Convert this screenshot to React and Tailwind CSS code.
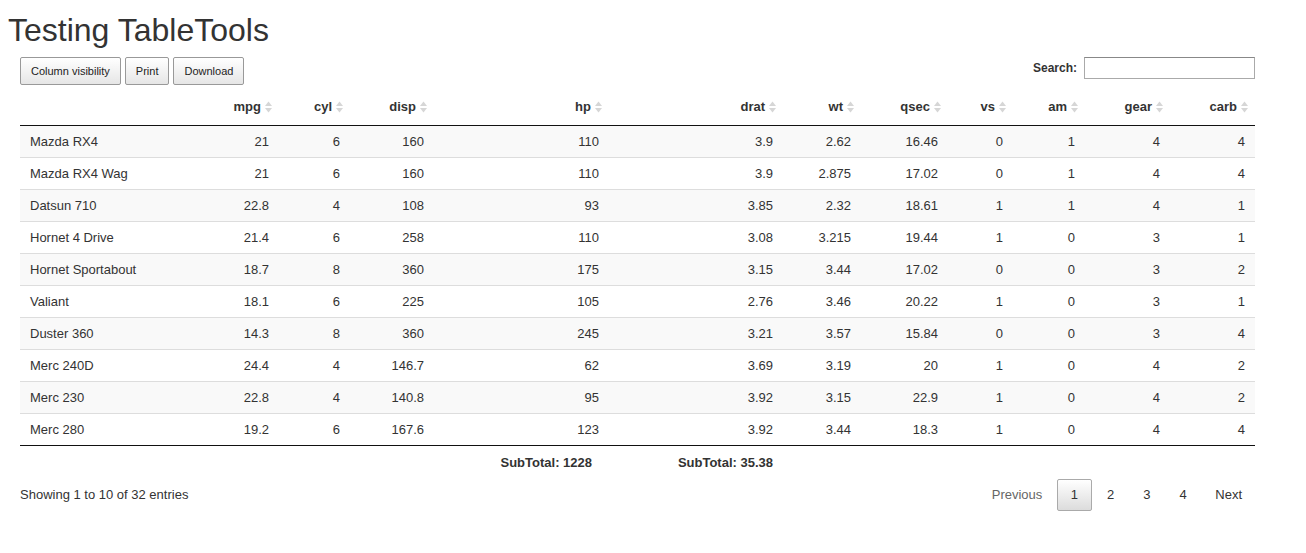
import React from 'react';

// mtcars preview rows
const columns = ['mpg', 'cyl', 'disp', 'hp', 'drat', 'wt', 'qsec', 'vs', 'am', 'gear', 'carb'];
const widths = [180, 79, 71, 84, 175, 174, 78, 87, 65, 72, 85, 85];

const rows = [
    ['Mazda RX4', '21', '6', '160', '110', '3.9', '2.62', '16.46', '0', '1', '4', '4'],
    ['Mazda RX4 Wag', '21', '6', '160', '110', '3.9', '2.875', '17.02', '0', '1', '4', '4'],
    ['Datsun 710', '22.8', '4', '108', '93', '3.85', '2.32', '18.61', '1', '1', '4', '1'],
    ['Hornet 4 Drive', '21.4', '6', '258', '110', '3.08', '3.215', '19.44', '1', '0', '3', '1'],
    ['Hornet Sportabout', '18.7', '8', '360', '175', '3.15', '3.44', '17.02', '0', '0', '3', '2'],
    ['Valiant', '18.1', '6', '225', '105', '2.76', '3.46', '20.22', '1', '0', '3', '1'],
    ['Duster 360', '14.3', '8', '360', '245', '3.21', '3.57', '15.84', '0', '0', '3', '4'],
    ['Merc 240D', '24.4', '4', '146.7', '62', '3.69', '3.19', '20', '1', '0', '4', '2'],
    ['Merc 230', '22.8', '4', '140.8', '95', '3.92', '3.15', '22.9', '1', '0', '4', '2'],
    ['Merc 280', '19.2', '6', '167.6', '123', '3.92', '3.44', '18.3', '1', '0', '4', '4'],
];

const SortIcon = () => (
    <svg width="7" height="12" viewBox="0 0 7 12" className="ml-[4px] shrink-0">
        <polygon points="3.5,0.5 7,5 0,5" fill="#d6d6d6" />
        <polygon points="0,7 7,7 3.5,11.5" fill="#d6d6d6" />
    </svg>
);

const ToolButton = ({ children }) => (
    <button className="h-[28px] px-[10px] text-[11px] text-[#222] border border-[#999] rounded-[2px] bg-gradient-to-b from-white to-[#e6e6e6]">
        {children}
    </button>
);

const PageButton = ({ children, current }) => (
    <span
        className={
            'ml-[2px] px-[12.5px] h-[32px] flex items-center border rounded-[2px] text-[#333] ' +
            (current ? 'border-[#aaa] bg-gradient-to-b from-white to-[#dcdcdc]' : 'border-transparent')
        }
    >
        {children}
    </span>
);

const App = () => {
    return (
        <div className="min-h-[553px] bg-white text-[#333]" style={{ fontFamily: '"Liberation Sans", Arial, sans-serif' }}>
            <h1 className="pl-[8px] pt-[12px] text-[32px] leading-[36px] text-[#333]">Testing TableTools</h1>

            <div className="px-[20px]">
                {/* toolbar: buttons + search */}
                <div className="mt-[9px] flex justify-between items-start w-[1235px]">
                    <div className="flex gap-[4px]">
                        <ToolButton>Column visibility</ToolButton>
                        <ToolButton>Print</ToolButton>
                        <ToolButton>Download</ToolButton>
                    </div>
                    <label className="flex items-center gap-[7px] text-[12px] font-bold text-[#333]">
                        Search:
                        <input className="w-[171px] h-[22px] border border-[#aaa] border-t-[#888] outline-none" />
                    </label>
                </div>

                <table className="mt-[4px] w-[1235px] table-fixed border-separate border-spacing-0 text-[13px]">
                    <colgroup>
                        {widths.map((w, i) => (
                            <col key={i} style={{ width: w }} />
                        ))}
                    </colgroup>
                    <thead>
                        <tr>
                            <th className="border-b border-[#111] py-[10px] leading-[16px]"></th>
                            {columns.map(c => (
                                <th key={c} className="border-b border-[#111] pl-[10px] pr-[7px] py-[10px] leading-[16px] font-bold text-[#333]">
                                    <div className="flex justify-end items-center">
                                        <span>{c}</span>
                                        <SortIcon />
                                    </div>
                                </th>
                            ))}
                        </tr>
                    </thead>
                    <tbody>
                        {rows.map((r, ri) => (
                            <tr key={r[0]} className={ri % 2 === 0 ? 'bg-[#f9f9f9]' : 'bg-white'}>
                                {r.map((v, ci) => (
                                    <td
                                        key={ci}
                                        className={
                                            (ri === 0 ? 'h-[31px] ' : 'h-[32px] border-t border-[#ddd] ') +
                                            (ci === 0 ? 'text-left pl-[10px] ' : 'text-right pr-[10px] ') +
                                            'leading-[16px] text-[#333]'
                                        }
                                    >
                                        {v}
                                    </td>
                                ))}
                            </tr>
                        ))}
                    </tbody>
                    <tfoot>
                        <tr>
                            {widths.map((_, i) => (
                                <th
                                    key={i}
                                    className={
                                        'border-t border-[#111] pt-[9px] pb-[6px] leading-[16px] font-bold text-right text-[#333] ' +
                                        (i === 5 ? 'pr-[10px]' : 'pr-[17px]')
                                    }
                                >
                                    {i === 4 ? 'SubTotal: 1228' : i === 5 ? 'SubTotal: 35.38' : ''}
                                </th>
                            ))}
                        </tr>
                    </tfoot>
                </table>

                {/* info + pagination */}
                <div className="mt-[2px] w-[1235px] flex justify-between items-center text-[13px]">
                    <div className="text-[#333]">Showing 1 to 10 of 32 entries</div>
                    <div className="flex items-center">
                        <span className="px-[13px] h-[32px] flex items-center text-[#666]">Previous</span>
                        <PageButton current>1</PageButton>
                        <PageButton>2</PageButton>
                        <PageButton>3</PageButton>
                        <PageButton>4</PageButton>
                        <span className="ml-[2px] px-[13px] h-[32px] flex items-center text-[#333]">Next</span>
                    </div>
                </div>
            </div>
        </div>
    );
};

export default App;
